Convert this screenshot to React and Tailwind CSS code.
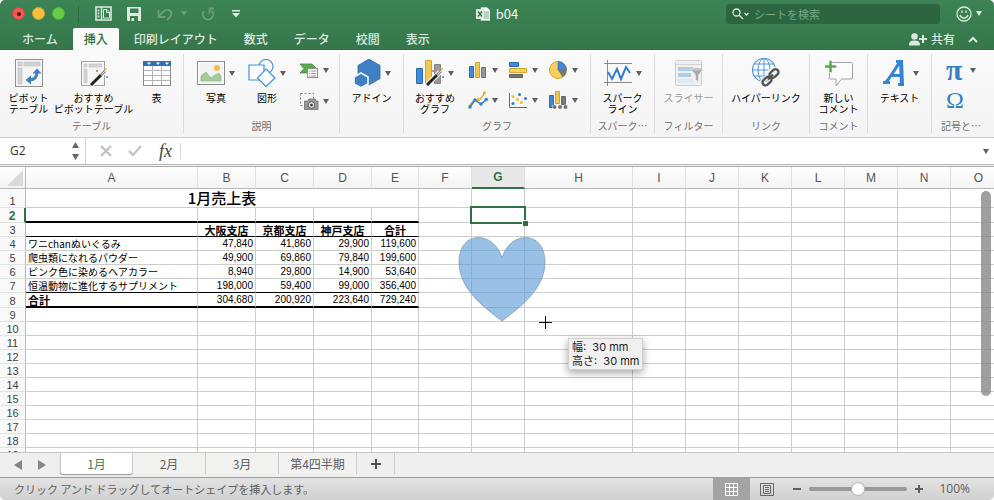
import { useState } from 'react';

const menuTabs = ['ホーム', '挿入', '印刷レイアウト', '数式', 'データ', '校閲', '表示'];

const columns = [
  { name: 'A', width: 'w-[172px]' },
  { name: 'B', width: 'w-[58px]' },
  { name: 'C', width: 'w-[58px]' },
  { name: 'D', width: 'w-[58px]' },
  { name: 'E', width: 'w-[47px]' },
  { name: 'F', width: 'w-[53px]' },
  { name: 'G', width: 'w-[53px]' },
  { name: 'H', width: 'w-[108px]' },
  { name: 'I', width: 'w-[53px]' },
  { name: 'J', width: 'w-[53px]' },
  { name: 'K', width: 'w-[53px]' },
  { name: 'L', width: 'w-[53px]' },
  { name: 'M', width: 'w-[53px]' },
  { name: 'N', width: 'w-[53px]' },
  { name: 'O', width: '' },
];

const cells = {
  3: ['', '大阪支店', '京都支店', '神戸支店', '合計'],
  4: ['ワニchanぬいぐるみ', '47,840', '41,860', '29,900', '119,600'],
  5: ['爬虫類になれるパウダー', '49,900', '69,860', '79,840', '199,600'],
  6: ['ピンク色に染めるヘアカラー', '8,940', '29,800', '14,900', '53,640'],
  7: ['恒温動物に進化するサプリメント', '198,000', '59,400', '99,000', '356,400'],
  8: ['合計', '304,680', '200,920', '223,640', '729,240'],
};

const rowHeights = { 1: 'h-[19px]', 2: 'h-[15px]', 8: 'h-[15px]' };

const ruleBelow = {
  2: 'border-b-2 border-b-black',
  3: 'border-b border-b-black',
  7: 'border-b border-b-black',
  8: 'border-b-2 border-b-black',
};

const rows = Array.from({ length: 19 }, (_, i) => i + 1);

function Caret({ className = 'text-[#606060]' }) {
  return (
    <svg viewBox="0 0 6 5" className={`h-[5px] w-1.5 shrink-0 ${className}`}>
      <path d="M0 0h6L3 5z" fill="currentColor" />
    </svg>
  );
}

function Wand() {
  return (
    <g>
      <path d="M11 26 24 13" stroke="#fff" strokeWidth="5" />
      <path d="M11 26 21 16" stroke="#222" strokeWidth="3" />
      <path d="M21 16 25 12" stroke="#888" strokeWidth="3" />
      <path d="M21.5 15.5 25 12" stroke="#ddd" strokeWidth="1" />
      <rect x="16" y="11" width="2" height="2" fill="#e4837c" />
      <rect x="25" y="9" width="2" height="2" fill="#f2c94f" />
      <rect x="26" y="17" width="2" height="2" fill="#5fa4dd" />
    </g>
  );
}

function PivotIcon() {
  return (
    <svg viewBox="0 0 28 28" className="h-7 w-7" fill="none">
      <rect x=".5" y=".5" width="27" height="27" fill="#f5f5f5" stroke="#919191" />
      <path d="M3 3h4v4H3zM9 3h16v4H9zM3 9h4v16H3z" fill="#d3d3d3" stroke="#bdbdbd" strokeWidth=".6" />
      <path d="M14 21c5 0 8-2 8-8" stroke="#3f82c4" strokeWidth="3" />
      <path d="M17.500 14.500 22 9.500l4.500 5zM16 16.500v9l-5.500-4.500z" fill="#3f82c4" />
    </svg>
  );
}

function RecommendedPivotIcon() {
  return (
    <svg viewBox="0 0 28 28" className="h-7 w-7" fill="none">
      <rect x="1.500" y="2.500" width="23" height="24" fill="#f5f5f5" stroke="#a2a2a2" />
      <path d="M4 5h3v3H4zM9 5h13v3H9zM4 10h3v14H4z" fill="#d3d3d3" stroke="#c2c2c2" strokeWidth=".6" />
      <Wand />
    </svg>
  );
}

function TableIcon() {
  return (
    <svg viewBox="0 0 28 28" className="h-7 w-7" fill="none">
      <rect x=".5" y="2.500" width="27" height="24" fill="#fff" stroke="#8d8d8d" />
      <path d="M1 11.500h26M1 16.500h26M1 21.500h26M9.500 7v19M18.500 7v19" stroke="#b5b5b5" />
      <path d="M0 2h28v5H0z" fill="#2f6fb3" />
      <path d="M4 3.500h4l-2 2.500zM13 3.500h4l-2 2.500zM22 3.500h4l-2 2.500z" fill="#fff" />
    </svg>
  );
}

function PhotoIcon() {
  return (
    <svg viewBox="0 0 28 28" className="h-7 w-7">
      <rect x=".5" y="2.500" width="27" height="23" fill="#fff" stroke="#8b8b8b" />
      <rect x="2" y="4" width="24" height="20" fill="#f3f3f3" />
      <circle cx="20" cy="9" r="3" fill="#eebf4d" />
      <path d="M4 22v-5l5-4 5 6 4-3 4-2 2 3v5z" fill="#a3cc9b" stroke="#84b67d" strokeWidth=".6" />
    </svg>
  );
}

function ShapesIcon() {
  return (
    <svg viewBox="0 0 28 28" className="h-7 w-7" fill="#fafcff" stroke="#4492dc" strokeWidth="1.200">
      <circle cx="18" cy="7.500" r="7" />
      <path d="M1 6h15v15H1z" />
      <path d="m18 10 9 9-9 8.500L9.500 19z" />
    </svg>
  );
}

function SmartArtIcon() {
  return (
    <svg viewBox="0 0 20 18" className="h-[18px] w-5">
      <path d="M1 3h12l4 4-4 5H1l4-4.500z" fill="#5daa4c" stroke="#3f8c35" strokeWidth=".8" />
      <rect x="8.500" y="7.500" width="10" height="9" fill="#fff" stroke="#8e8e8e" />
      <path d="M10 10h1M12 10h5M10 12.500h1M12 12.500h5M10 15h1M12 15h5" stroke="#8e8e8e" />
    </svg>
  );
}

function ScreenshotIcon() {
  return (
    <svg viewBox="0 0 20 18" className="h-[18px] w-5">
      <path d="M1.500 1.500h13v12h-13z" fill="none" stroke="#858585" strokeDasharray="2 2" />
      <path d="M5.500 9H9l1-2h6l1 2h2v8.500H5.500z" fill="#999" stroke="#6f6f6f" strokeWidth=".8" />
      <circle cx="12.500" cy="13" r="3.300" fill="#eee" stroke="#5c5c5c" />
      <circle cx="12.500" cy="13" r="1.500" fill="#444" />
    </svg>
  );
}

function AddinIcon() {
  return (
    <svg viewBox="0 0 28 28" className="h-7 w-7" fill="#3f80c5">
      <path d="m16 0 11 6.500v13L16 26 5 19.500v-13z" stroke="#2d68a8" strokeWidth=".8" />
      <path d="m8 14 7 4v7l-7 3.500L1 25v-7z" stroke="#f6f6f6" strokeWidth="1.600" />
      <path d="m8 15.500 5.500 3v6L8 27.500 2 24.500v-6z" fill="#3f80c5" />
    </svg>
  );
}

function RecommendedChartIcon() {
  return (
    <svg viewBox="0 0 28 28" className="h-7 w-7" fill="none">
      <path d="M.5 9.500h6v15h-6z" fill="#4389d6" stroke="#2d6cae" />
      <path d="M9.500 1.500h6v23h-6z" fill="#f1c84c" stroke="#d1a42c" />
      <path d="M18.500 5.500h6v19h-6z" fill="#999" stroke="#888" />
      <Wand />
    </svg>
  );
}

function ColumnChartIcon() {
  return (
    <svg viewBox="0 0 20 18" className="h-[18px] w-5">
      <path d="M1.500 5.500h4v11h-4z" fill="#4389d6" stroke="#2d6cae" />
      <path d="M7.500 1.500h4v15h-4z" fill="#f1c84c" stroke="#d1a42c" />
      <path d="M13.500 6.500h4v10h-4z" fill="#969696" stroke="#717171" />
    </svg>
  );
}

function BarChartIcon() {
  return (
    <svg viewBox="0 0 20 18" className="h-[18px] w-5">
      <path d="M1.500 1.500h9v4h-9z" fill="#4389d6" stroke="#2d6cae" />
      <path d="M1.500 7.500h17v4h-17z" fill="#f8d35b" stroke="#d1a42c" />
      <path d="M1.500 13.500h13v3h-13z" fill="#777" stroke="#5d5d5d" />
    </svg>
  );
}

function PieChartIcon() {
  return (
    <svg viewBox="0 0 20 18" className="h-[18px] w-5">
      <circle cx="10" cy="9" r="8.500" fill="#f8d05b" stroke="#d1a42c" />
      <path d="M10 9V.5A8.500 8.500 0 0 1 18.500 9z" fill="#4389d6" stroke="#2d6cae" strokeWidth=".6" />
      <path d="M10 9h8.500a8.500 8.500 0 0 1-4 7.300z" fill="#777" />
    </svg>
  );
}

function LineChartIcon() {
  return (
    <svg viewBox="0 0 20 18" className="h-[18px] w-5" fill="none">
      <path d="M1 15 6 9l5 .5L17 2" stroke="#d9ae38" strokeWidth="1.300" />
      <path d="M2 16 7 9l6 4 6-5" stroke="#2f7ed0" strokeWidth="1.500" />
      <g fill="#2f7ed0">
        <circle cx="2" cy="16" r="1.700" />
        <circle cx="7" cy="9" r="1.700" />
        <circle cx="13" cy="13" r="1.700" />
        <circle cx="18.300" cy="8.500" r="1.700" />
      </g>
      <circle cx="16.500" cy="2" r="1.700" fill="#e8bd45" />
      <circle cx="10" cy="8" r="1.500" fill="#e8bd45" />
    </svg>
  );
}

function ScatterIcon() {
  return (
    <svg viewBox="0 0 20 18" className="h-[18px] w-5">
      <path d="M1.500 2v14.500H19" fill="none" stroke="#6b6b6b" />
      <g fill="#2f7ed0">
        <circle cx="11.500" cy="3.500" r="1.500" />
        <circle cx="5" cy="12.500" r="1.500" />
        <circle cx="17.500" cy="7.500" r="1.500" />
      </g>
      <g fill="#e8bd45">
        <circle cx="5" cy="5.500" r="1.500" />
        <circle cx="9.500" cy="8.500" r="1.500" />
        <circle cx="13.500" cy="11.500" r="1.500" />
      </g>
    </svg>
  );
}

function PivotChartIcon() {
  return (
    <svg viewBox="0 0 20 18" className="h-[18px] w-5">
      <path d="M1.500 4.500h4v12h-4z" fill="#4389d6" stroke="#2d6cae" />
      <path d="M7.500.5h4v12h-4z" fill="#f1c84c" stroke="#d1a42c" />
      <path d="M13.500 5.500h4v8h-4z" fill="#777" stroke="#666" />
      <g fill="#6d6d6d" stroke="#f6f6f6" strokeWidth=".6">
        <circle cx="6.500" cy="16" r="2.200" />
        <circle cx="12" cy="16" r="2.200" />
        <circle cx="17.500" cy="16" r="2.200" />
      </g>
    </svg>
  );
}

function SparklineIcon() {
  return (
    <svg viewBox="0 0 28 28" className="h-7 w-7" fill="none">
      <path d="M0 4.500h28M0 23.500h28M3.500 1v26" stroke="#8b8b8b" />
      <path d="m4 13 4 7 5-10 4 10 5-12 4 6" stroke="#2f7ed0" strokeWidth="2" />
    </svg>
  );
}

function SlicerIcon() {
  return (
    <svg viewBox="0 0 28 28" className="h-7 w-7" fill="none">
      <rect x=".5" y="1.500" width="26" height="25" rx="1.500" fill="#f0f0f0" stroke="#cfcfcf" />
      <path d="M1 5.500h25" stroke="#d6d6d6" />
      <path d="M3 8h15v4H3zM3 14h13v4H3z" fill="#b0cde8" />
      <path d="M3 20h15v4H3z" fill="#dce9f1" />
      <path d="M15.500 10h13l-5 6v7l-3-2v-5z" fill="#aaa" stroke="#f5f5f5" strokeWidth=".6" />
      <ellipse cx="22" cy="10.300" rx="5.800" ry="1.400" fill="#c6c6c6" />
    </svg>
  );
}

function HyperlinkIcon() {
  return (
    <svg viewBox="0 0 30 30" className="h-[30px] w-[30px]" fill="none">
      <circle cx="13" cy="12" r="11.500" fill="#fff" stroke="#4c94da" strokeWidth="1.200" />
      <path d="M13 .5v23M1.500 12h23M3.500 6h19M3.500 18h19" stroke="#4c94da" />
      <ellipse cx="13" cy="12" rx="6" ry="11.500" stroke="#4c94da" />
      <g stroke="#f6f6f6" strokeWidth="5">
        <rect x="19" y="10.500" width="6" height="10" rx="3" transform="rotate(48 22 15.500)" />
        <rect x="13" y="18" width="6" height="10" rx="3" transform="rotate(48 16 23)" />
      </g>
      <g stroke="#555" strokeWidth="2.400">
        <rect x="20" y="10.500" width="6" height="10" rx="3" transform="rotate(48 23 15.500)" />
        <rect x="13" y="18" width="6" height="10" rx="3" transform="rotate(48 16 23)" />
        <path d="m17 21.500 5-5" />
      </g>
    </svg>
  );
}

function CommentIcon() {
  return (
    <svg viewBox="0 0 28 28" className="h-7 w-7">
      <path
        d="M5 3.500h21.500a1 1 0 0 1 1 1V19a1 1 0 0 1-1 1H16.500L11 27v-7H5.500a1 1 0 0 1-1-1V4z"
        fill="#fbfbfb"
        stroke="#a3a3a3"
      />
      <path d="M4 1.500h3V6h4.500v3H7v4.500H4V9H-.5V6H4z" fill="#58a84c" stroke="#f6f6f6" strokeWidth=".6" />
    </svg>
  );
}

function TextIcon() {
  return (
    <svg viewBox="0 0 28 28" className="h-7 w-7" fill="none" stroke="#3583d3">
      <path d="M5 23C10 18 13 11 19 3" strokeWidth="3" />
      <path d="M20 1 21 26" strokeWidth="4" />
      <path d="M11 16.500h9M2 23.500h7M17 25.500h6M15 2.500h7" strokeWidth="3" />
    </svg>
  );
}

function LargeTool({ icon, label, arrow, width, disabled }) {
  return (
    <button disabled={disabled} className={`flex shrink-0 flex-col items-center gap-[5px] ${width}`}>
      <span className="flex h-7 items-center gap-1">
        {icon}
        {arrow && <Caret />}
      </span>
      <span
        className={`whitespace-pre text-center text-[10px] leading-[11px] ${
          disabled ? 'text-[#9b9b9b]' : 'text-black'
        }`}
      >
        {label}
      </span>
    </button>
  );
}

function SmallTool({ icon, name }) {
  return (
    <button aria-label={name} className="flex h-[18px] items-center gap-1">
      {icon}
      <Caret />
    </button>
  );
}

function ToolGroup({ label, width, children }) {
  return (
    <section className={`flex h-[79px] shrink-0 flex-col justify-between border-r border-[#dcdcdc] ${width}`}>
      <div className="flex items-start justify-center pt-[5px]">{children}</div>
      <h2 className="pb-px text-center text-[10px] leading-3 whitespace-nowrap text-[#707070]">{label}</h2>
    </section>
  );
}

function TitleBar() {
  return (
    <div className="grid h-[27px] grid-cols-[1fr_auto_1fr] items-center text-[#dcebe0]">
      <div className="flex items-center pl-3">
        <div className="flex gap-[7px]">
          <button
            aria-label="閉じる"
            className="flex h-[13px] w-[13px] items-center justify-center rounded-full border border-[#d6453e] bg-[#f25950]"
          >
            <span className="h-1 w-1 rounded-full bg-[#5a0d0a]" />
          </button>
          <button aria-label="しまう" className="h-[13px] w-[13px] rounded-full border border-[#dba133] bg-[#f8be3e]" />
          <button aria-label="拡大" className="h-[13px] w-[13px] rounded-full border border-[#50b534] bg-[#65ce46]" />
        </div>
        <span className="ml-[13px] h-4 w-px bg-[#31693f]" />
        <div className="ml-4 flex items-center">
          <button aria-label="ギャラリー">
            <svg viewBox="0 0 17 15" className="h-[15px] w-[17px]" fill="none" stroke="currentColor">
              <path d="M1 1h15v13H1z" strokeWidth="1.600" />
              <path d="M3.500 3.500v8" strokeWidth="1.500" strokeDasharray="2 1" />
              <path d="M6.500 1v13" strokeWidth="1.400" />
              <path d="M8.500 3.500H12l2.500 2.500v6h-6z" />
              <path d="M11.500 3v3.500h3" />
            </svg>
          </button>
          <button aria-label="保存" className="ml-[15px]">
            <svg viewBox="0 0 14 14" className="h-3.5 w-3.5">
              <path
                fillRule="evenodd"
                fill="currentColor"
                d="M0 0h14v14H1l-1-1zM3 1.500v4.500h8.500V1.500zM3 9v5h1.500v-3H7v3h4V9z"
              />
            </svg>
          </button>
          <button aria-label="元に戻す" className="ml-4 flex items-center gap-2 text-[#6b9d7a]">
            <svg viewBox="0 0 16 14" className="h-3.5 w-4" fill="none" stroke="currentColor" strokeWidth="1.800">
              <path d="m2 9 4.500-4.500c3-3 8-1.500 8 2 0 2.500-1.500 3.500-4.500 6.500" />
              <path d="M1.500 3v7h7" />
            </svg>
            <Caret className="text-[#6b9d7a]" />
          </button>
          <button aria-label="やり直し" className="ml-3.5 text-[#6b9d7a]">
            <svg viewBox="0 0 14 14" className="h-3.5 w-3.5" fill="none" stroke="currentColor" strokeWidth="1.800">
              <path d="M3 4a5.200 5.200 0 1 0 7.500-.5" />
              <path d="M13 1.500H8.500v5" />
            </svg>
          </button>
          <button aria-label="ツールバーのカスタマイズ" className="ml-4">
            <svg viewBox="0 0 10 8" className="h-2 w-2.5" fill="currentColor">
              <path d="M1 0h8v1.400H1zM1 3h8L5 7.500z" />
            </svg>
          </button>
        </div>
      </div>

      <h1 className="flex items-center gap-1.5 text-[13px] leading-4 text-[#f0f7f2]">
        <svg viewBox="0 0 14 14" className="h-3.5 w-3.5">
          <path d="M5 .5h6l3 3v10H5z" fill="#fff" stroke="#c4d9ca" strokeWidth=".6" />
          <path d="M8 5h5M8 7h5M8 9h5M8 11h5" stroke="#79a587" />
          <path d="M0 2h8v10H0z" fill="#dbe9df" />
          <path d="m2 4.500 4 5M6 4.500l-4 5" stroke="#2f6f42" strokeWidth="1.300" />
        </svg>
        b04
      </h1>

      <div className="flex items-center justify-end gap-4 pr-3">
        <div className="flex h-5 w-[214px] items-center rounded-[3px] bg-[#2c6641] pl-1.5">
          <svg viewBox="0 0 18 12" className="h-3 w-[18px] shrink-0" fill="none" stroke="currentColor" strokeWidth="1.300">
            <circle cx="4.500" cy="4.500" r="3.500" />
            <path d="m7 7 4 4M12.500 5l2 2 2-2" />
          </svg>
          <input
            type="text"
            aria-label="検索"
            placeholder="シートを検索"
            className="ml-1 w-full min-w-0 bg-transparent text-[11px] leading-4 outline-none placeholder:text-[#78a786]"
          />
        </div>
        <button aria-label="フィードバック" className="flex items-center gap-1">
          <svg viewBox="0 0 16 16" className="h-4 w-4" fill="none" stroke="currentColor" strokeWidth="1.300">
            <circle cx="8" cy="8" r="7" />
            <path d="M4 9c1 4 7 4 8 0M6 4.500v2.500M10 4.500v2.500" />
          </svg>
          <Caret className="text-[#dcebe0]" />
        </button>
      </div>
    </div>
  );
}

function MenuBar({ active, onSelect }) {
  return (
    <div className="flex h-[23px] items-end justify-between">
      <nav className="flex gap-1 pl-[11px]">
        {menuTabs.map((tab) => (
          <button
            key={tab}
            onClick={() => onSelect(tab)}
            className={`h-[22px] px-[11px] text-[12px] leading-[22px] font-medium ${
              tab === active ? 'rounded-t-[2px] bg-[#fafafa] text-[#2f6f42]' : 'text-[#dcebe0]'
            }`}
          >
            {tab}
          </button>
        ))}
      </nav>
      <div className="flex h-[22px] items-center gap-[13px] pr-4 text-[#dcebe0]">
        <button className="flex items-center gap-1 text-[12px] leading-4 font-medium">
          <svg viewBox="0 0 18 13" className="h-[13px] w-[18px]" fill="currentColor">
            <circle cx="5.500" cy="3.500" r="3.200" />
            <path d="M0 12.500c0-4 1.500-5 5.500-5s5.500 1 5.500 5zM13 2h2v3h3v2h-3v3h-2V7h-3V5h3z" />
          </svg>
          共有
        </button>
        <button aria-label="リボンを閉じる">
          <svg viewBox="0 0 10 7" className="h-[7px] w-2.5" fill="none" stroke="currentColor" strokeWidth="2">
            <path d="m1 6 4-4 4 4" />
          </svg>
        </button>
      </div>
    </div>
  );
}

function Ribbon() {
  return (
    <div className="flex h-[88px] items-start overflow-hidden border-b border-[#cbcbcb] bg-gradient-to-b from-[#fafafa] to-[#f4f4f4] pt-1">
      <ToolGroup label="テーブル" width="w-[184px]">
        <LargeTool icon={<PivotIcon />} label={'ピボット\nテーブル'} width="w-[54px]" />
        <LargeTool icon={<RecommendedPivotIcon />} label={'おすすめ\nピボットテーブル'} width="w-[76px]" />
        <LargeTool icon={<TableIcon />} label="表" width="w-[50px]" />
      </ToolGroup>
      <ToolGroup label="説明" width="w-[156px]">
        <LargeTool icon={<PhotoIcon />} label="写真" arrow width="w-[51px]" />
        <LargeTool icon={<ShapesIcon />} label="図形" arrow width="w-[51px]" />
        <div className="flex flex-col gap-[13px] pt-0.5 pr-1 pl-1.5">
          <SmallTool icon={<SmartArtIcon />} name="SmartArt" />
          <SmallTool icon={<ScreenshotIcon />} name="スクリーンショット" />
        </div>
      </ToolGroup>
      <ToolGroup label="" width="w-16">
        <LargeTool icon={<AddinIcon />} label="アドイン" arrow width="w-[58px]" />
      </ToolGroup>
      <ToolGroup label="グラフ" width="w-[187px]">
        <LargeTool icon={<RecommendedChartIcon />} label={'おすすめ\nグラフ'} arrow width="w-[54px]" />
        <div className="grid grid-cols-3 gap-x-2.5 gap-y-3 pt-0.5 pr-2 pl-1.5">
          <SmallTool icon={<ColumnChartIcon />} name="縦棒" />
          <SmallTool icon={<BarChartIcon />} name="横棒" />
          <SmallTool icon={<PieChartIcon />} name="円" />
          <SmallTool icon={<LineChartIcon />} name="折れ線" />
          <SmallTool icon={<ScatterIcon />} name="散布図" />
          <SmallTool icon={<PivotChartIcon />} name="ピボットグラフ" />
        </div>
      </ToolGroup>
      <ToolGroup label="スパーク…" width="w-16">
        <LargeTool icon={<SparklineIcon />} label={'スパーク\nライン'} arrow width="w-[58px]" />
      </ToolGroup>
      <ToolGroup label="フィルター" width="w-[68px]">
        <LargeTool icon={<SlicerIcon />} label="スライサー" width="w-[60px]" disabled />
      </ToolGroup>
      <ToolGroup label="リンク" width="w-[87px]">
        <LargeTool icon={<HyperlinkIcon />} label="ハイパーリンク" width="w-20" />
      </ToolGroup>
      <ToolGroup label="コメント" width="w-[58px]">
        <LargeTool icon={<CommentIcon />} label={'新しい\nコメント'} width="w-[54px]" />
      </ToolGroup>
      <ToolGroup label="" width="w-16">
        <LargeTool icon={<TextIcon />} label="テキスト" arrow width="w-[58px]" />
      </ToolGroup>
      <section className="flex h-[79px] min-w-0 flex-1 flex-col justify-between">
        <div className="flex flex-col gap-3 pt-[7px] pl-3.5 font-['Liberation_Serif',serif] text-[#3a80c6]">
          <button aria-label="数式" className="flex h-[18px] items-center gap-2 text-[30px] leading-[18px] font-bold">
            <span>π</span>
            <Caret />
          </button>
          <button aria-label="記号と特殊文字" className="flex h-[18px] items-center text-[24px] leading-[18px]">
            Ω
          </button>
        </div>
        <h2 className="pr-1 pb-px text-center text-[10px] leading-3 whitespace-nowrap text-[#707070]">記号と…</h2>
      </section>
    </div>
  );
}

function FormulaBar() {
  return (
    <div className="flex h-[29px] shrink-0 items-start border-b border-[#a9a9a9] bg-[#f4f4f4]">
      <div className="flex h-[27px] w-full items-center border-b border-[#b5b5b5] bg-white">
        <div className="flex h-full w-[86px] items-center justify-between border-r border-[#cfcfcf] pr-1.5 pl-2.5">
          <input
            aria-label="名前ボックス"
            defaultValue="G2"
            className="w-12 bg-transparent font-['Open_Sans',sans-serif] text-[12px] leading-4 text-[#333] outline-none"
          />
          <svg viewBox="0 0 7 18" className="h-[18px] w-[7px] text-[#666]" fill="currentColor">
            <path d="M0 6h7L3.500 0zM0 12h7l-3.500 6z" />
          </svg>
        </div>
        <button aria-label="キャンセル" className="ml-3.5">
          <svg viewBox="0 0 12 12" className="h-3 w-3" fill="none" stroke="#c1c1c1" strokeWidth="2.200">
            <path d="m1 1 10 10M11 1 1 11" />
          </svg>
        </button>
        <button aria-label="入力" className="ml-4">
          <svg viewBox="0 0 14 12" className="h-3 w-3.5" fill="none" stroke="#c1c1c1" strokeWidth="2.200">
            <path d="m1 6 4 4 8-9" />
          </svg>
        </button>
        <button
          aria-label="数式バー"
          className="ml-[17px] font-['Liberation_Serif',serif] text-[18px] leading-5 text-[#444] italic"
        >
          fx
        </button>
        <span className="ml-2 h-4 w-px bg-[#d6d6d6]" />
        <input aria-label="数式" className="h-full min-w-0 flex-1 bg-transparent px-2 text-[12px] outline-none" />
        <button aria-label="数式バーの展開" className="pr-[5px]">
          <Caret />
        </button>
      </div>
    </div>
  );
}

function cellClass(row, col) {
  const inTable = col < 5;
  const rule = inTable && ruleBelow[row] ? ruleBelow[row] : 'border-b border-b-[#cdcdcd]';
  const side = col < columns.length - 1 ? 'border-r border-r-[#cdcdcd]' : '';
  let text = 'text-left pl-0.5 text-[10px]';
  if (row === 3) text = 'text-center text-[11px] font-bold';
  else if (col > 0) text = "text-right pr-0.5 font-['Liberation_Sans',sans-serif] text-[10px]";
  else if (row === 8) text = 'text-left pl-0.5 text-[11px] font-bold';
  return `relative p-0 leading-[12px] whitespace-nowrap ${side} ${rule} ${text}`;
}

function headerClass(name) {
  if (name === 'G') return 'border-r border-b-2 border-r-[#e0e0e0] border-b-[#2f7145] bg-[#e8e8e8] font-bold text-[#2f7145]';
  // the last column runs on past the window, so its letter sits right of centre
  if (name === 'O') return 'border-b border-b-[#b8b8b8] pl-3 font-normal';
  return 'border-r border-b border-r-[#e0e0e0] border-b-[#b8b8b8] font-normal';
}

function Sheet() {
  return (
    <table className="w-full table-fixed border-separate border-spacing-0 bg-white text-black">
      <colgroup>
        <col className="w-[26px]" />
        {columns.map((c) => (
          <col key={c.name} className={c.width} />
        ))}
      </colgroup>
      <thead>
        <tr className="h-[22px] bg-gradient-to-b from-white to-[#f3f3f3] font-['Liberation_Sans',sans-serif] text-[12px] text-[#555]">
          <th className="border-r border-b border-[#b8b8b8] p-0">
            <svg viewBox="0 0 16 16" className="ml-auto mr-0.5 h-4 w-4">
              <path d="M16 0v16H0z" fill="#dadada" />
            </svg>
          </th>
          {columns.map((c) => (
            <th key={c.name} scope="col" className={`py-0 ${headerClass(c.name)}`}>
              {c.name}
            </th>
          ))}
        </tr>
      </thead>
      <tbody>
        {rows.map((row) => (
          <tr key={row} className={rowHeights[row] ?? 'h-[14px]'}>
            <th
              scope="row"
              className={`border-b border-b-[#e2e2e2] bg-[#f9f9f9] p-0 text-center align-bottom font-['Liberation_Sans',sans-serif] leading-[12px] ${
                row === 2
                  ? 'border-r-2 border-r-[#2f7145] text-[12px] font-bold text-[#2f7145]'
                  : 'border-r border-r-[#b8b8b8] text-[11px] font-normal text-[#444]'
              }`}
            >
              {row}
            </th>
            {row === 1 && (
              <td
                colSpan={5}
                className="border-r border-b border-[#cdcdcd] p-0 text-center text-[15px] leading-[18px] font-medium"
              >
                1月売上表
              </td>
            )}
            {columns.map((c, col) =>
              row === 1 && col < 5 ? null : (
                <td key={c.name} className={cellClass(row, col)}>
                  {cells[row]?.[col]}
                  {row === 2 && c.name === 'G' && (
                    <span className="absolute -inset-0.5 z-10 border-2 border-[#2f7145]">
                      <span className="absolute -right-1 -bottom-1 h-1.5 w-1.5 border-t border-l border-white bg-[#2f7145]" />
                    </span>
                  )}
                </td>
              )
            )}
          </tr>
        ))}
      </tbody>
    </table>
  );
}

function DrawingLayer() {
  return (
    <>
      <svg viewBox="0 0 88 87" className="absolute top-[69px] left-[458px] z-10 h-[87px] w-[88px]">
        <path
          d="M44 22C52-6 87-6 87 26 87 52 64 70 44 85 24 70 1 52 1 26 1-6 36-6 44 22z"
          fill="#5b9bd5"
          fillOpacity=".62"
          stroke="#7796b4"
          strokeOpacity=".7"
        />
      </svg>
      <svg viewBox="0 0 13 13" className="absolute top-[149px] left-[539px] z-10 h-[13px] w-[13px]" stroke="#000">
        <path d="M6.500 0v13M0 6.500h13" />
      </svg>
      <div className="absolute top-[171px] left-[568px] z-10 border border-[#d0d0d0] bg-[#f0f0f0] px-[3px] py-px font-['Inter','Noto_Sans_CJK_JP',sans-serif] text-[11px] leading-[14px] whitespace-pre text-[#222] shadow-[0_3px_8px_rgba(0,0,0,0.35)]">
        {'幅:  30 mm\n高さ:  30 mm'}
      </div>
      <div className="absolute top-[24px] right-[3px] z-10 h-[205px] w-2.5 rounded-full bg-[#888]/80" />
    </>
  );
}

function SheetTabs({ active, onSelect }) {
  return (
    <div className="flex h-[25px] shrink-0 items-start border-t border-[#c6c6c6] bg-[#efefef]">
      <div className="flex h-[23px] w-[60px] items-center gap-4 pl-3.5">
        <button aria-label="前のシート">
          <svg viewBox="0 0 8 10" className="h-2.5 w-2" fill="#858585">
            <path d="M8 0v10L0 5z" />
          </svg>
        </button>
        <button aria-label="次のシート">
          <svg viewBox="0 0 8 10" className="h-2.5 w-2" fill="#858585">
            <path d="M0 0v10l8-5z" />
          </svg>
        </button>
      </div>
      {['1月', '2月', '3月', '第4四半期'].map((name) => (
        <button
          key={name}
          onClick={() => onSelect(name)}
          className={`h-[21px] border-r border-[#cbcbcb] pt-px text-[12px] leading-5 ${
            name === '第4四半期' ? 'w-[78px]' : 'w-[73px]'
          } ${
            name === active
              ? 'rounded-b-[3px] border-l bg-white text-[#3b8352] shadow-[0_1px_1px_#999]'
              : 'bg-[#f2f2f1] text-[#606060]'
          }`}
        >
          {name}
        </button>
      ))}
      <button
        aria-label="シートの挿入"
        className="flex h-[21px] w-[38px] items-center justify-center border-r border-[#cbcbcb]"
      >
        <svg viewBox="0 0 10 10" className="h-2.5 w-2.5" stroke="#555" strokeWidth="2">
          <path d="M5 0v10M0 5h10" />
        </svg>
      </button>
    </div>
  );
}

function StatusBar() {
  const [zoom, setZoom] = useState(100);

  return (
    <footer className="flex h-[23px] shrink-0 items-center justify-between border-t border-[#9d9d9d] bg-gradient-to-b from-[#e3e3e3] to-[#d0d0d0] pl-3.5 text-[11px] leading-4 text-[#606060]">
      <p>クリック アンド ドラッグしてオートシェイプを挿入します。</p>
      <div className="flex h-full items-center pr-6">
        <button aria-label="標準" className="flex h-full w-[37px] items-center justify-center bg-[#a3a3a3]">
          <svg viewBox="0 0 13 13" className="h-[13px] w-[13px]" fill="none" stroke="#fff">
            <path d="M.5.5h12v12H.5zM4.500.5v12M8.500.5v12M.5 4.500h12M.5 8.500h12" />
          </svg>
        </button>
        <button aria-label="ページ レイアウト" className="ml-2.5">
          <svg viewBox="0 0 14 13" className="h-[13px] w-3.5" fill="none" stroke="#666">
            <path d="M.5.5h13v12H.5zM3.500 2.500h7v8h-7zM5 4.500h4M5 6.500h4M5 8.500h4" />
          </svg>
        </button>
        <button aria-label="縮小" className="ml-[19px]" onClick={() => setZoom(zoom - 10)}>
          <svg viewBox="0 0 8 8" className="h-2 w-2" stroke="#606060" strokeWidth="2">
            <path d="M0 4h8" />
          </svg>
        </button>
        <input
          type="range"
          aria-label="ズーム"
          min="0"
          max="200"
          value={zoom}
          onChange={(e) => setZoom(Number(e.target.value))}
          className="mx-2 h-1 w-[98px] appearance-none rounded-full bg-[#999] [&::-webkit-slider-thumb]:h-3 [&::-webkit-slider-thumb]:w-3 [&::-webkit-slider-thumb]:appearance-none [&::-webkit-slider-thumb]:rounded-full [&::-webkit-slider-thumb]:bg-white [&::-webkit-slider-thumb]:shadow-[0_0_1px_1px_#b5b5b5]"
        />
        <button aria-label="拡大" onClick={() => setZoom(zoom + 10)}>
          <svg viewBox="0 0 8 8" className="h-2 w-2" stroke="#606060" strokeWidth="2">
            <path d="M0 4h8M4 0v8" />
          </svg>
        </button>
        <span className="ml-4 font-['Open_Sans',sans-serif] text-[12px]">{zoom}%</span>
      </div>
    </footer>
  );
}

export default function App() {
  const [menu, setMenu] = useState('挿入');
  const [sheet, setSheet] = useState('1月');

  return (
    <div className="flex h-screen flex-col overflow-hidden rounded-[5px] bg-white font-['Noto_Sans_CJK_JP',sans-serif]">
      <header className="shrink-0">
        <div className="bg-gradient-to-b from-[#3c8455] to-[#35764a] shadow-[inset_0_-1px_#2f6a42]">
          <TitleBar />
          <MenuBar active={menu} onSelect={setMenu} />
        </div>
        <Ribbon />
      </header>
      <FormulaBar />
      <main className="relative min-h-0 flex-1 overflow-hidden">
        <Sheet />
        <DrawingLayer />
      </main>
      <SheetTabs active={sheet} onSelect={setSheet} />
      <StatusBar />
    </div>
  );
}
